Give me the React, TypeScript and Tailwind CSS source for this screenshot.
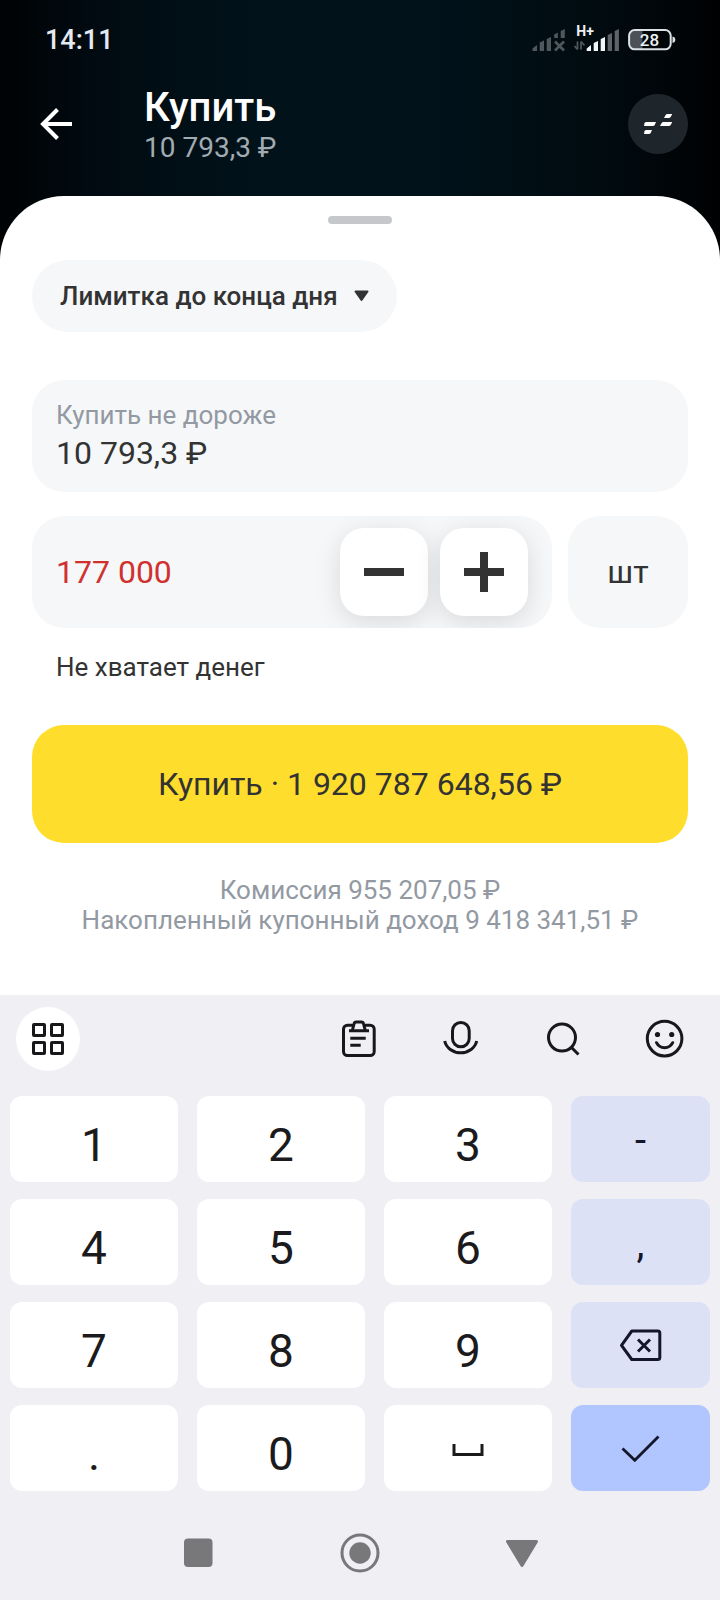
import React, { useState } from 'react';
import clsx from 'clsx';

type KeyDef = {
    id: string;
    label?: string;
    icon?: React.ReactNode;
    kind: 'digit' | 'side' | 'enter';
};

const StatusIcons = () => (
    <svg width="144" height="30" viewBox="0 0 144 30" className="block">
        {/* first sim, no signal */}
        <g fill="#50575c">
            <path d="M0.5 26v-2.500l4.500-3.500v6z" />
            <path d="M7.700 26v-8.500l4.300-2v10.500z" />
            <path d="M14.700 26v-12l4.300-2v14z" />
            <path d="M22.200 13v-3.500l3.700-2v5.500z" />
            <path d="M28.700 13v-7l4.100-2v9z" />
            <path d="M23 16.500l9 9M32 16.500l-9 9" stroke="#50575c" strokeWidth="2.600" />
        </g>
        {/* second sim */}
        <text x="44.300" y="11" fill="#eef1f3" className="font-[Roboto] text-[14px] font-bold">H+</text>
        <path d="M45.500 16.500v8M45.500 24.500l-3-3.500M49 24.500v-8M49 16.500l3.500 4" stroke="#50575c" strokeWidth="1.800" fill="none" />
        <g fill="#f3f6f7">
            <path d="M54.700 26v-2.500l4.300-3.500v6z" />
            <path d="M61.700 26v-8l4.300-2v10z" />
            <path d="M68.700 26v-12l4.300-2v14z" />
        </g>
        <g fill="#5d6367">
            <path d="M75.700 26v-16l4.300-2v18z" />
            <path d="M82.700 26v-20l4.200-2v22z" />
        </g>
        {/* battery */}
        <path d="M102 5h8.500v19h-8.500a4 4 0 0 1-4-4v-11a4 4 0 0 1 4-4z" fill="#4b5156" />
        <rect x="97.100" y="5.100" width="41.600" height="19.200" rx="5.500" fill="none" stroke="#dbe1e4" strokeWidth="2" />
        <path d="M140.500 11.500q2.800 0.500 2.800 3.200t-2.800 3.200z" fill="#dbe1e4" />
        <text x="117.500" y="21" textAnchor="middle" fill="#eef1f3" className="font-[Roboto] text-[17px] font-medium">28</text>
    </svg>
);

const BackArrow = () => (
    <svg width="32" height="32" viewBox="0 0 32 32" fill="none" stroke="#fff" strokeWidth="4">
        <path d="M32 16H3M17.500 1.500L3 16l14.500 14.500" />
    </svg>
);

const OrderBookIcon = () => (
    <svg width="28" height="20" viewBox="0 0 28 20" fill="#fff">
        <path d="M20 4l1.500-2.800Q22.200 0 23.500 0H28.300l-1.500 2.800Q26.200 4 24.800 4z" />
        <path d="M16 12l1.500-2.800Q18.200 8 19.500 8H28.300l-1.500 2.800Q26.200 12 24.800 12z" />
        <path d="M0 12l0.500-2.800Q1 8 2.500 8H12l-1.200 2.800Q10.200 12 8.800 12z" />
        <path d="M0 20l0.500-2.800Q1 16 2.500 16H8l-1.200 2.800Q6.200 20 4.800 20z" />
    </svg>
);

const BackspaceIcon = () => (
    <svg width="44" height="34" viewBox="0 0 44 34" fill="none" stroke="#14172a" strokeWidth="3" strokeLinejoin="round">
        <path d="M12.800 3h26a2 2 0 0 1 2 2v24.500a2 2 0 0 1-2 2h-26L2.500 17.300z" />
        <path d="M19 11.500l12 12M31 11.500l-12 12" />
    </svg>
);

const SpaceIcon = () => (
    <svg width="32" height="14" viewBox="0 0 32 14" fill="none" stroke="#1b1b1d" strokeWidth="3" className="mt-1">
        <path d="M2 1v10.500h28V1" />
    </svg>
);

const CheckIcon = () => (
    <svg width="40" height="28" viewBox="0 0 40 28" fill="none" stroke="#14172a" strokeWidth="2.800">
        <path d="M1.500 14.500L13.800 26.300L37.500 2.500" />
    </svg>
);

const toolbarIcons = [
    <>
        <rect x="4.500" y="6.200" width="30.700" height="30.300" rx="4" />
        <path d="M13.300 11.700l1.700-6.700q0.400-2 2.300-2h5q1.900 0 2.300 2l1.700 6.700" fill="#efeff4" />
        <path d="M10 11.700h20M11.300 19.300h15.400M11.300 26.300h10.400" />
    </>,
    <>
        <rect x="11.500" y="3.500" width="16.700" height="24.300" rx="8.300" />
        <path d="M3.700 22a16.300 14.500 0 0 0 32 0" />
    </>,
    <>
        <circle cx="19" cy="18.600" r="13.500" />
        <path d="M28.500 28.500l7 7" />
    </>,
    <>
        <circle cx="19.600" cy="19.600" r="17.300" />
        <path d="M11.500 23.700q2.500 5 8.100 5t8.100-5" strokeLinecap="round" />
        <circle cx="12.500" cy="15.500" r="2.600" fill="#18181b" stroke="none" />
        <circle cx="26.700" cy="15.500" r="2.600" fill="#18181b" stroke="none" />
    </>,
];

const keys: KeyDef[] = [
    { id: '1', label: '1', kind: 'digit' },
    { id: '2', label: '2', kind: 'digit' },
    { id: '3', label: '3', kind: 'digit' },
    { id: 'minus', label: '-', kind: 'side' },
    { id: '4', label: '4', kind: 'digit' },
    { id: '5', label: '5', kind: 'digit' },
    { id: '6', label: '6', kind: 'digit' },
    { id: 'comma', label: ',', kind: 'side' },
    { id: '7', label: '7', kind: 'digit' },
    { id: '8', label: '8', kind: 'digit' },
    { id: '9', label: '9', kind: 'digit' },
    { id: 'backspace', icon: <BackspaceIcon />, kind: 'side' },
    { id: 'dot', label: '.', kind: 'digit' },
    { id: '0', label: '0', kind: 'digit' },
    { id: 'space', icon: <SpaceIcon />, kind: 'digit' },
    { id: 'enter', icon: <CheckIcon />, kind: 'enter' },
];

const Key = ({ item, onPress }: { item: KeyDef; onPress: (id: string) => void }) => (
    <button
        onClick={() => onPress(item.id)}
        className={clsx(
            'flex items-center justify-center rounded-xl leading-none',
            item.kind === 'digit' && 'bg-white text-[46px] text-[#1b1b1d]',
            item.kind === 'side' && 'bg-[#dde1f6] text-[40px] text-[#14172a]',
            item.kind === 'enter' && 'bg-[#b1c5ff]',
            item.label && item.kind === 'digit' && 'pt-3',
            item.label && item.kind === 'side' && 'pt-1',
        )}
    >
        {item.label ?? item.icon}
    </button>
);

const StepButton = ({ plus, onClick }: { plus?: boolean; onClick: () => void }) => (
    <button
        onClick={onClick}
        className="flex size-[88px] items-center justify-center rounded-[24px] bg-white shadow-[0_6px_26px_rgba(0,0,0,0.12)]"
    >
        <svg width="40" height="40" viewBox="0 0 40 40" fill="#333333">
            <path d="M0 16h40v8H0z" />
            {plus && <path d="M16 0h8v40h-8z" />}
        </svg>
    </button>
);

const Keyboard = ({ onPress }: { onPress: (id: string) => void }) => (
    <div className="h-[605px] bg-[#efeff4]">
        <div className="flex h-[101px] items-start justify-between pt-3 pr-[35px] pl-4">
            <div className="flex size-16 items-center justify-center rounded-full bg-white">
                <svg width="32" height="32" viewBox="0 0 32 32" fill="none" stroke="#18181b" strokeWidth="3">
                    <rect x="1.500" y="1.500" width="11" height="11" rx="0.500" />
                    <rect x="19.500" y="1.500" width="11" height="11" rx="0.500" />
                    <rect x="1.500" y="19.500" width="11" height="11" rx="0.500" />
                    <rect x="19.500" y="19.500" width="11" height="11" rx="0.500" />
                </svg>
            </div>
            <div className="flex h-16 items-center gap-[62px]">
                {toolbarIcons.map((icon, i) => (
                    <svg key={i} width="40" height="40" viewBox="0 0 40 40" fill="none" stroke="#18181b" strokeWidth="3">
                        {icon}
                    </svg>
                ))}
            </div>
        </div>

        <div className="grid auto-rows-[86px] grid-cols-[168px_168px_168px_139px] gap-x-[19px] gap-y-[17px] px-2.5">
            {keys.map(k => <Key key={k.id} item={k} onPress={onPress} />)}
        </div>

        {/* system navigation */}
        <div className="mt-[42px] flex h-10 items-center justify-center">
            <svg width="356" height="40" viewBox="0 0 356 40" fill="#78787b">
                <rect x="2" y="5.500" width="28.500" height="28.500" rx="4" />
                <circle cx="178" cy="20" r="18" fill="none" stroke="#78787b" strokeWidth="3" />
                <circle cx="178" cy="20" r="10.700" />
                <path d="M325.500 8.500h29L340 32.500z" stroke="#78787b" strokeWidth="3" strokeLinejoin="round" />
            </svg>
        </div>
    </div>
);

export default function App() {
    const [quantity, setQuantity] = useState('177000');

    const handleKey = (id: string) => {
        if (id === 'backspace') setQuantity(q => q.slice(0, -1));
        else if (/^\d$/.test(id)) setQuantity(q => q + id);
    };

    const step = (d: number) => setQuantity(q => String(Math.max(0, Number(q) + d)));

    const formatted = quantity.replace(/\B(?=(\d{3})+$)/g, ' ');

    return (
        <div className="flex h-[1600px] w-[720px] flex-col overflow-hidden bg-[linear-gradient(90deg,#000204_0%,#010a10_12%,#01121a_35%,#01121a_60%,#010b10_84%,#000102_100%)] font-[Roboto,'Noto_Sans',sans-serif] text-[#333333]">
            <header className="h-[196px] shrink-0">
                <div className="flex h-20 items-center justify-between pr-[44px] pl-[45px]">
                    <span className="text-[27px] leading-8 font-medium text-[#e4eaf0]">14:11</span>
                    <StatusIcons />
                </div>
                <div className="flex h-[88px] items-center pr-8 pl-10">
                    <BackArrow />
                    <div className="ml-[72px] flex-1">
                        <h1 className="text-[40px] leading-[48px] font-medium text-white">Купить</h1>
                        <p className="text-[28px] leading-8 text-[#a2abb1]">10 793,3 ₽</p>
                    </div>
                    <button className="flex size-[60px] items-center justify-center rounded-full bg-[#1f262b]">
                        <OrderBookIcon />
                    </button>
                </div>
            </header>

            <main className="h-[799px] shrink-0 rounded-t-[64px] bg-white px-8 pt-5">
                <div className="mx-auto h-2 w-16 rounded-full bg-[#c6c7ca]" />

                <button className="mt-9 flex h-[72px] w-[365px] items-center justify-between rounded-full bg-[#f6f7f8] pr-[28px] pl-[28px] text-[26px] font-medium">
                    Лимитка до конца дня
                    <svg width="15" height="12" viewBox="0 0 15 12" fill="#333333" stroke="#333333" strokeWidth="2" strokeLinejoin="round">
                        <path d="M1.500 1.500h12L7.500 10z" />
                    </svg>
                </button>

                <div className="mt-12 h-28 rounded-[32px] bg-[#f6f7f8] px-6 pt-[18px]">
                    <div className="text-[26px] leading-[34px] text-[#9299a2]">Купить не дороже</div>
                    <div className="text-[32px] leading-[42px]">10 793,3 ₽</div>
                </div>

                <div className="mt-6 flex gap-4">
                    <div className="flex h-28 w-[520px] items-center gap-3 overflow-hidden rounded-[32px] bg-[#f6f7f8] pr-6 pl-6">
                        <span className="flex-1 text-[32px] text-[#d0312f]">{formatted}</span>
                        <StepButton onClick={() => step(-1)} />
                        <StepButton plus onClick={() => step(1)} />
                    </div>
                    <div className="flex h-28 w-[120px] items-center justify-center rounded-[32px] bg-[#f6f7f8] text-[32px]">
                        шт
                    </div>
                </div>
                <p className="mt-[23px] pl-6 text-[26px] leading-8">Не хватает денег</p>

                <button className="mt-[42px] h-[118px] w-full rounded-[32px] bg-[#ffdd2d] text-[32px]">
                    Купить · 1 920 787 648,56 ₽
                </button>

                <div className="mt-8 text-center text-[26px] leading-[30px] whitespace-nowrap text-[#9299a2]">
                    <p>Комиссия 955 207,05 ₽</p>
                    <p>Накопленный купонный доход 9 418 341,51 ₽</p>
                </div>
            </main>

            <Keyboard onPress={handleKey} />
        </div>
    );
}
